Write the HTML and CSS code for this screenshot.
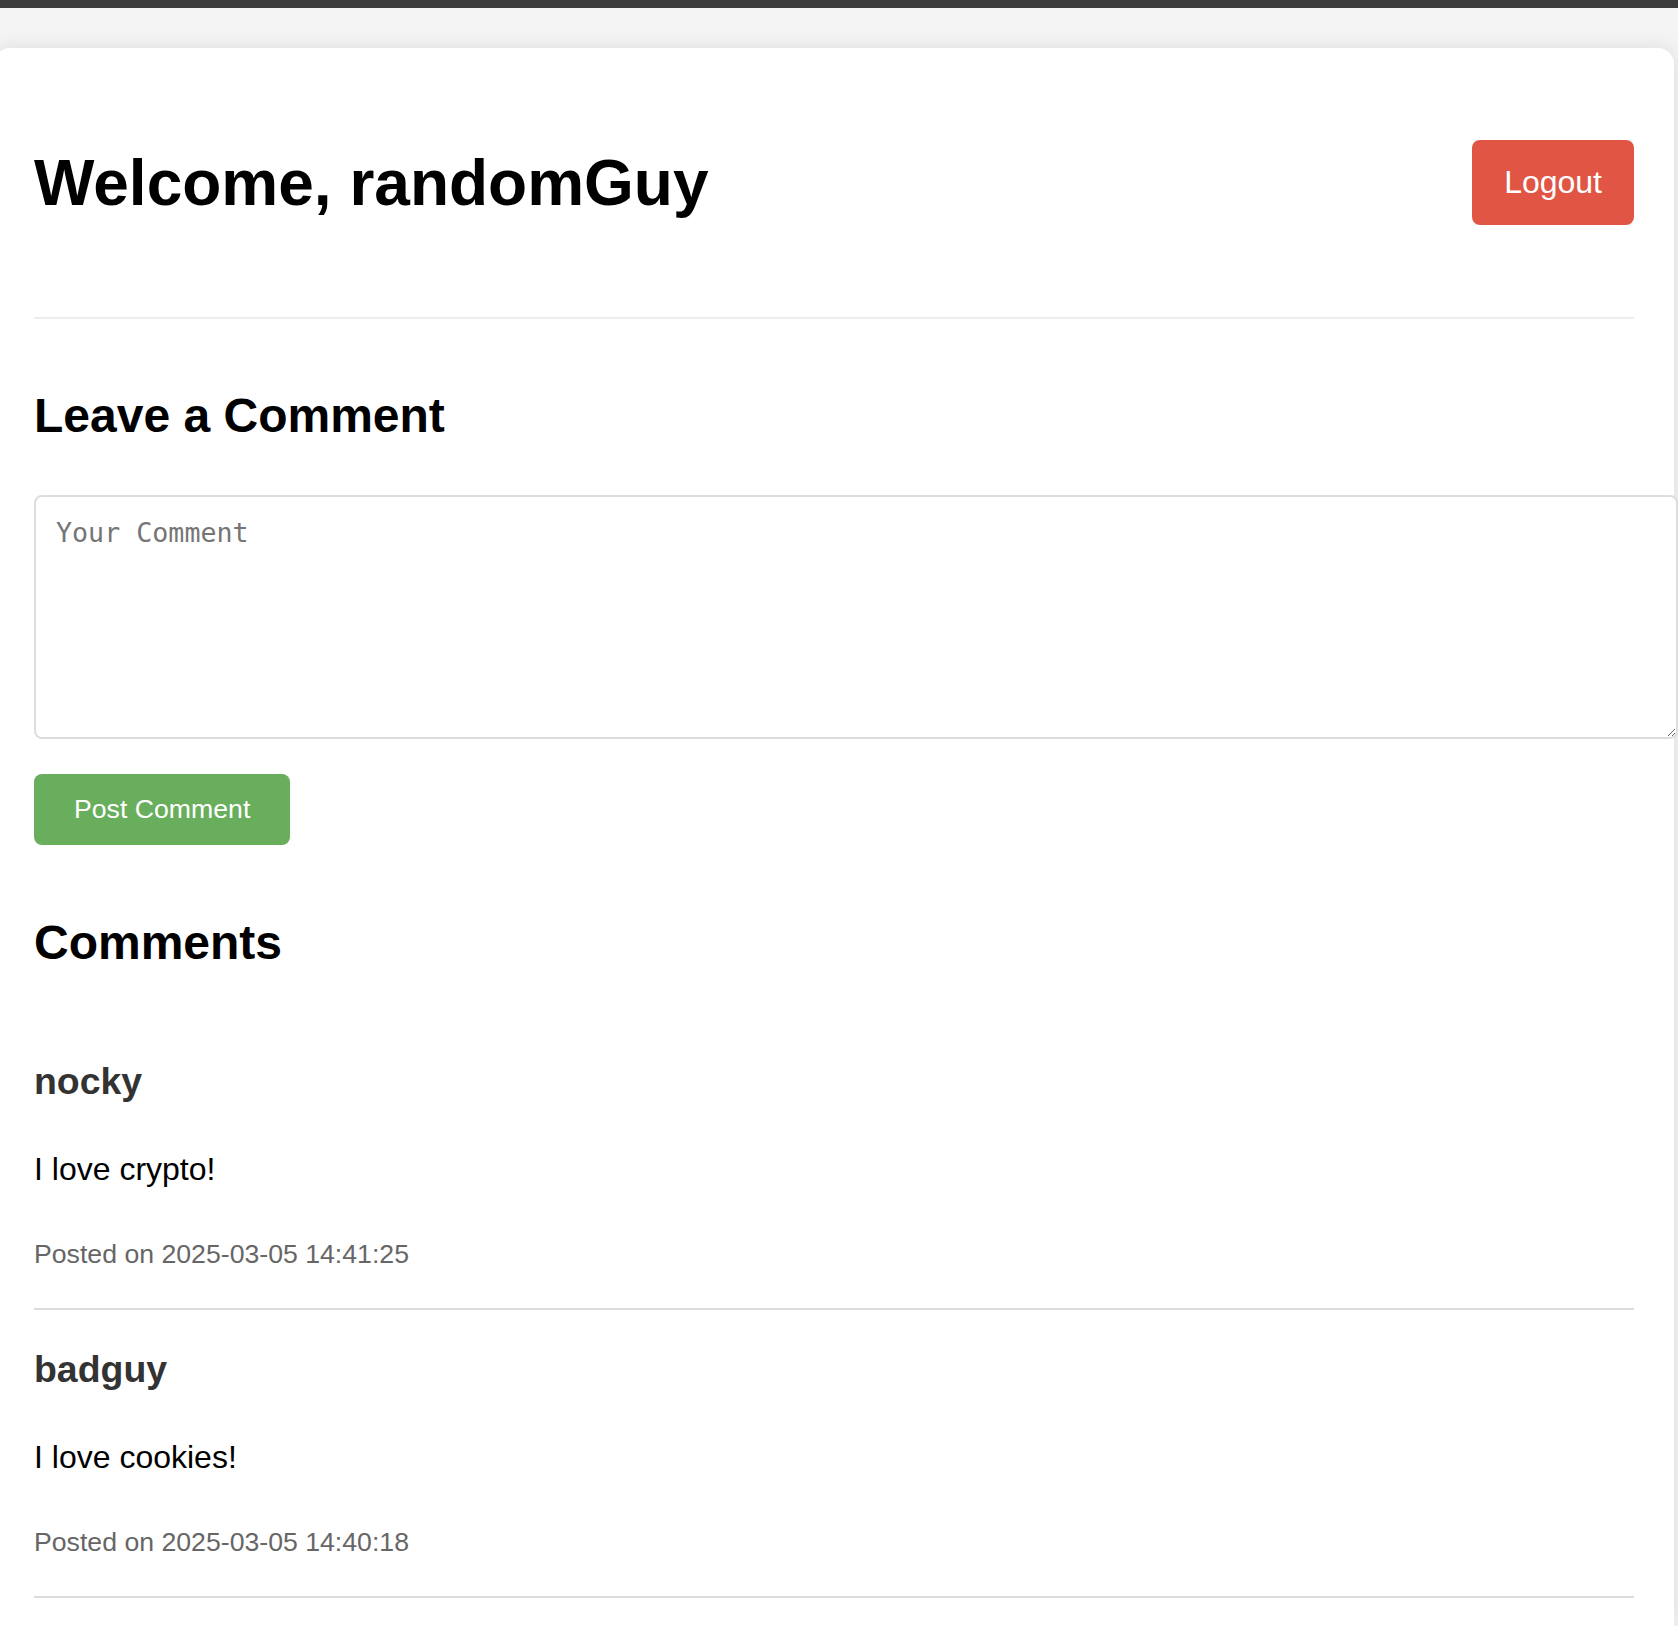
FILE: index.html
```html
<!DOCTYPE html>
<html lang="en">
<head>
<meta charset="utf-8">
<title>Dashboard</title>
<link rel="stylesheet" href="styles.css">
</head>
<body>
<div class="topbar"></div>
<div class="card">
  <header class="header">
    <h1 class="welcome">Welcome, randomGuy</h1>
    <button class="btn btn-logout">Logout</button>
  </header>

  <h2 class="section-title leave-title">Leave a Comment</h2>
  <textarea class="comment-input" placeholder="Your Comment"></textarea>
  <button class="btn btn-post">Post Comment</button>

  <h2 class="section-title comments-title">Comments</h2>
  <div class="comment-list">
    <div class="comment">
      <h3 class="comment-user">nocky</h3>
      <p class="comment-text">I love crypto!</p>
      <p class="comment-meta">Posted on 2025-03-05 14:41:25</p>
    </div>
    <div class="comment">
      <h3 class="comment-user">badguy</h3>
      <p class="comment-text">I love cookies!</p>
      <p class="comment-meta">Posted on 2025-03-05 14:40:18</p>
    </div>
  </div>
</div>
</body>
</html>
```
FILE: styles.css
```css
html, body {
  margin: 0;
  padding: 0;
}
body {
  background: #f4f4f4;
  font-family: "Liberation Sans", Arial, Helvetica, sans-serif;
  color: #000;
  overflow: hidden;
}
.topbar {
  height: 8px;
  background: #3c3c3c;
}
.card {
  width: 1600px;
  margin: 40px 0 0 -6px;
  padding: 40px 40px 28px;
  background: #fff;
  border-radius: 16px 16px 0 0;
  box-shadow: 0 0 20px rgba(0, 0, 0, 0.1);
}
.header {
  display: flex;
  justify-content: space-between;
  align-items: center;
  padding: 52px 0 92px;
  border-bottom: 2px solid #eeeeee;
}
.welcome {
  margin: 0;
  font-size: 64px;
  font-weight: bold;
  line-height: normal;
}
.btn {
  font-family: "Liberation Sans", Arial, Helvetica, sans-serif;
  color: #fff;
  border: none;
  border-radius: 8px;
  cursor: pointer;
  line-height: normal;
}
.btn-logout {
  background: #e05543;
  font-size: 32px;
  padding: 24px 32px;
}
.section-title {
  font-size: 48px;
  font-weight: bold;
  line-height: normal;
}
.leave-title {
  margin: 68.5px 0 52.3px;
}
.comment-input {
  display: block;
  width: 1600px;
  height: 200px;
  padding: 20px;
  border: 2px solid #dddddd;
  border-radius: 8px;
  font-family: "DejaVu Sans Mono", "Liberation Mono", monospace;
  font-size: 26.67px;
  color: #000;
  background: #fff;
  margin: 0;
}
.comment-input::placeholder {
  color: #757575;
}
.btn-post {
  display: block;
  margin-top: 35px;
  background: #68ae5c;
  font-size: 26.67px;
  padding: 20px 40px;
}
.comments-title {
  margin: 70px 0 53px;
}
.comment {
  padding: 37.5px 0 38px;
  border-bottom: 2px solid #dddddd;
}
.comment-user {
  margin: 0 0 48px;
  font-size: 37.44px;
  font-weight: bold;
  color: #333333;
  line-height: normal;
}
.comment-text {
  margin: 0 0 51px;
  font-size: 32px;
  line-height: normal;
  color: #000;
}
.comment-meta {
  margin: 0;
  font-size: 26.67px;
  line-height: normal;
  color: #666666;
}
```
